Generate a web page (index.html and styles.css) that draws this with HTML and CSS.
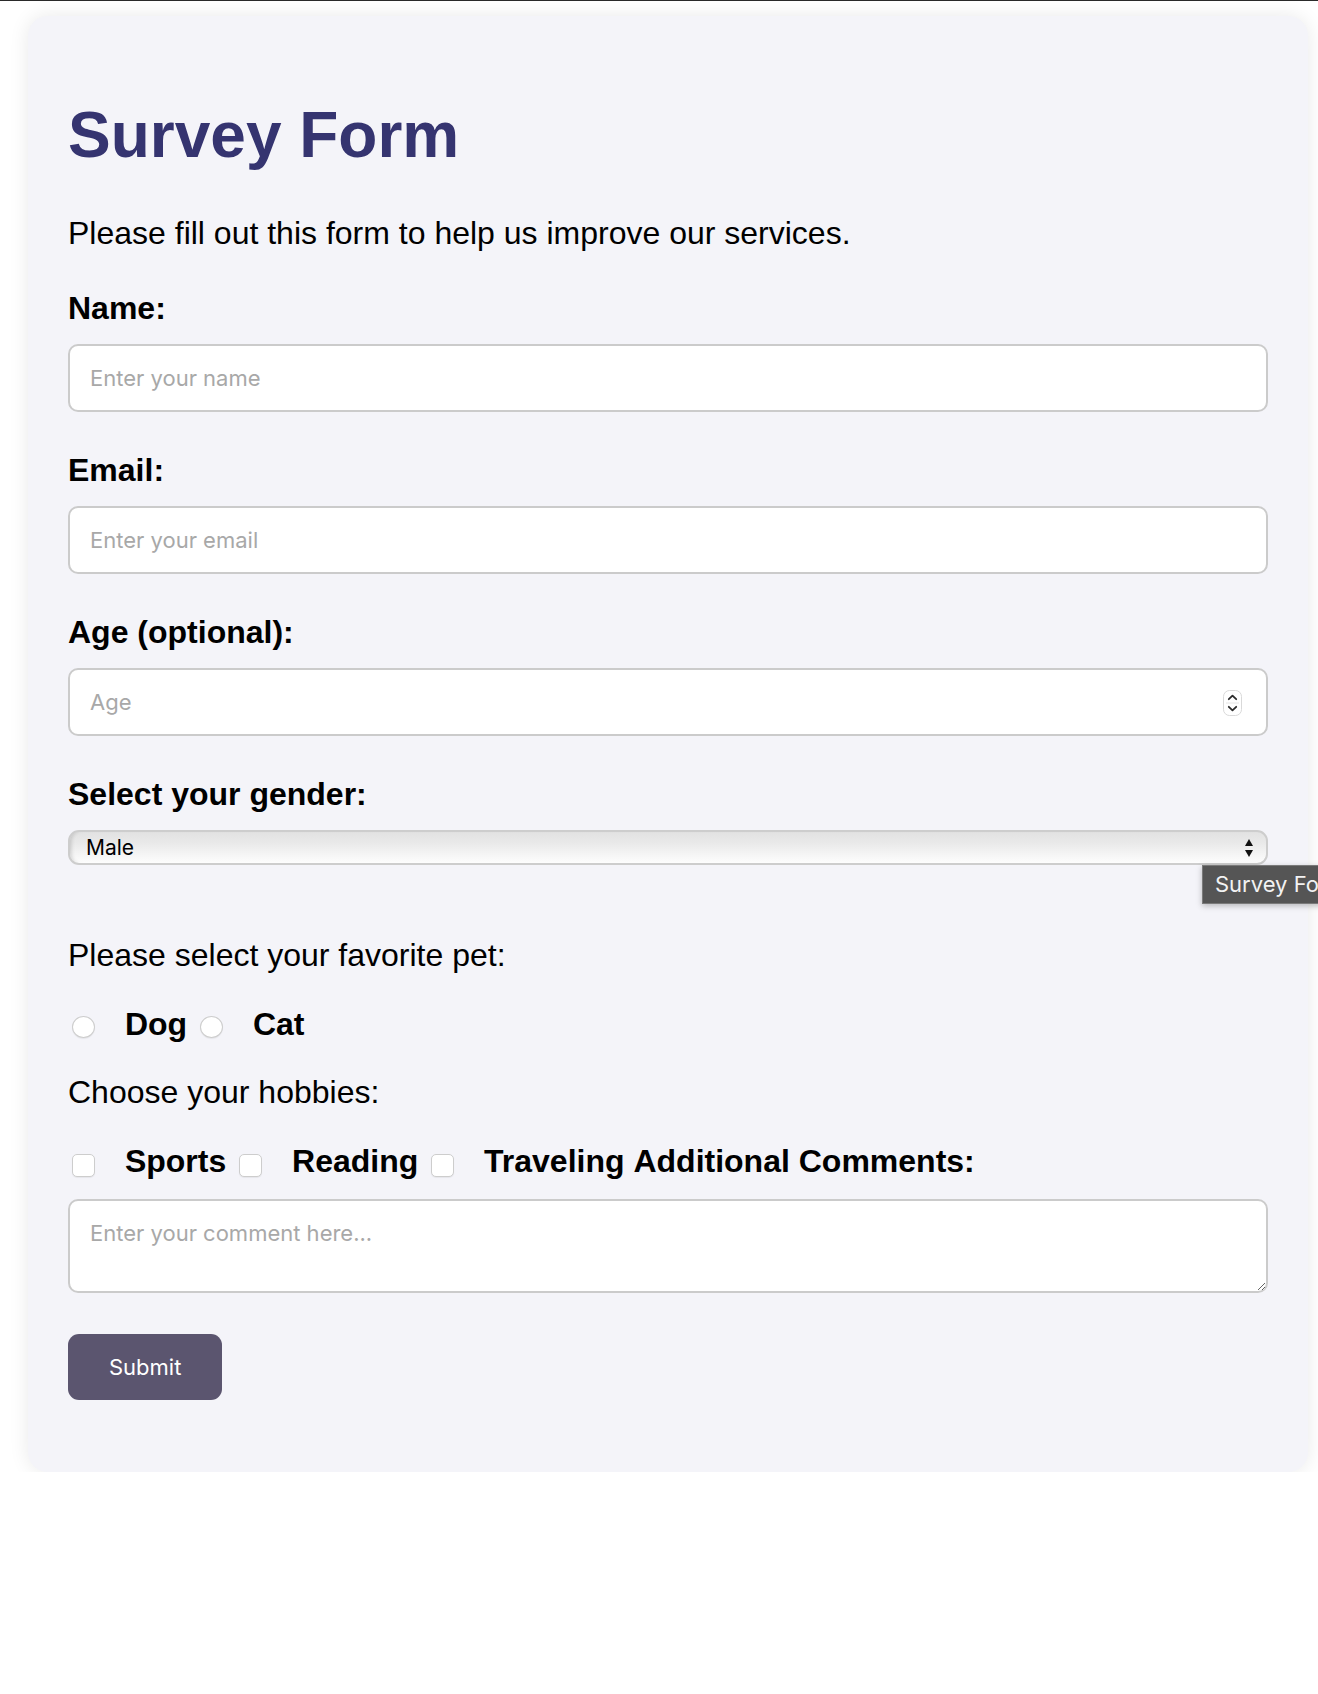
FILE: index.html
```html
<!DOCTYPE html>
<html lang="en">
<head>
<meta charset="utf-8">
<title>Survey Form</title>
<link rel="stylesheet" href="styles.css">
</head>
<body>
<div class="topline"></div>
<main class="card">
  <h1 class="title">Survey Form</h1>
  <p class="intro">Please fill out this form to help us improve our services.</p>
  <form class="form">
    <label class="field-label" for="name">Name:</label>
    <input class="text-input" id="name" type="text" placeholder="Enter your name">

    <label class="field-label" for="email">Email:</label>
    <input class="text-input" id="email" type="email" placeholder="Enter your email">

    <label class="field-label" for="age">Age (optional):</label>
    <div class="number-wrap">
      <input class="text-input" id="age" type="number" placeholder="Age">
      <span class="spinner">
        <svg width="19" height="26" viewBox="0 0 19 26">
          <rect x="0.5" y="0.5" width="18" height="25" rx="6" fill="#fff" stroke="#d9d9d9"/>
          <line x1="3" y1="13" x2="16" y2="13" stroke="#e6e6e6" stroke-width="1"/>
          <path d="M5.8 9.2 L9.5 5.6 L13.2 9.2" fill="none" stroke="#2b2b2b" stroke-width="1.8" stroke-linecap="round" stroke-linejoin="round"/>
          <path d="M5.8 16.8 L9.5 20.4 L13.2 16.8" fill="none" stroke="#2b2b2b" stroke-width="1.8" stroke-linecap="round" stroke-linejoin="round"/>
        </svg>
      </span>
    </div>

    <label class="field-label" for="gender">Select your gender:</label>
    <div class="select-wrap">
      <select class="select" id="gender">
        <option>Male</option>
        <option>Female</option>
        <option>Other</option>
      </select>
      <svg class="select-arrows" width="10" height="20" viewBox="0 0 10 20">
        <path d="M1 8 L5 1 L9 8 Z" fill="#111"/>
        <path d="M1 12 L5 19 L9 12 Z" fill="#111"/>
      </svg>
    </div>

    <p class="question question-first">Please select your favorite pet:</p>
    <div class="choice-row"><input class="radio" type="radio" id="dog" name="pet"> <label class="choice-label" for="dog">Dog</label> <input class="radio" type="radio" id="cat" name="pet"> <label class="choice-label" for="cat">Cat</label></div>

    <p class="question">Choose your hobbies:</p>
    <div class="choice-row"><input class="check" type="checkbox" id="sports"> <label class="choice-label" for="sports">Sports</label> <input class="check" type="checkbox" id="reading"> <label class="choice-label" for="reading">Reading</label> <input class="check" type="checkbox" id="traveling"> <label class="choice-label" for="traveling">Traveling</label> <label class="inline-label" for="comments">Additional Comments:</label></div>

    <textarea class="comments" id="comments" placeholder="Enter your comment here..."></textarea>

    <button class="submit" type="submit">Submit</button>
  </form>
</main>
<div class="tooltip">Survey Form</div>
</body>
</html>
```

FILE: styles.css
```css
html {
  overflow: hidden;
}

body {
  margin: 0;
  background: #ffffff;
  font-family: "Liberation Sans", Arial, sans-serif;
  color: #000;
  position: relative;
}

.topline {
  height: 1px;
  background: #2a2a2a;
}

.card {
  box-sizing: border-box;
  width: 1280px;
  margin: 15px 0 0 28px;
  padding: 40px;
  background: #f4f4f9;
  border-radius: 20px;
  box-shadow: 0 0 20px rgba(0, 0, 0, 0.09);
}

.title {
  margin: 42px 0 43px;
  font-size: 64px;
  line-height: 74px;
  font-weight: 700;
  color: #353470;
}

.intro {
  margin: 0 0 38px;
  font-size: 32px;
  line-height: 37px;
}

.form {
  margin: 0 0 32px;
}

.field-label {
  display: block;
  margin: 0 0 17px;
  font-size: 32px;
  line-height: 37px;
  font-weight: 700;
}

.text-input {
  display: block;
  box-sizing: border-box;
  width: 100%;
  height: 68px;
  margin: 0 0 40px;
  padding: 20px;
  border: 2px solid #cbcbcb;
  border-radius: 10px;
  background: #fff;
  font-family: Inter, "Liberation Sans", sans-serif;
  font-size: 22px;
  line-height: 24px;
  color: #000;
  outline: none;
  -moz-appearance: textfield;
}

.text-input::placeholder,
.comments::placeholder {
  color: #a8a8a8;
}

.text-input::-webkit-inner-spin-button,
.text-input::-webkit-outer-spin-button {
  -webkit-appearance: none;
  margin: 0;
}

.number-wrap {
  position: relative;
}

.spinner {
  position: absolute;
  right: 26px;
  top: 22px;
  width: 19px;
  height: 26px;
  display: block;
}

.spinner svg {
  display: block;
}

.select-wrap {
  position: relative;
  margin: 0 0 72px;
}

.select {
  display: block;
  box-sizing: border-box;
  width: 100%;
  height: 35px;
  margin: 0;
  padding: 0 40px 0 16px;
  border: 2px solid #cdcdcd;
  border-radius: 11px;
  background: linear-gradient(to bottom, #e2e2e2 0%, #e9e9e9 35%, #f4f4f4 70%, #fdfdfd 100%);
  box-shadow: inset 4px 0 4px -3px rgba(0, 0, 0, 0.18), inset 0 -1px 0 rgba(255, 255, 255, 0.8);
  -webkit-appearance: none;
  appearance: none;
  font-family: Inter, "Liberation Sans", sans-serif;
  font-size: 21px;
  line-height: 31px;
  color: #000;
  outline: none;
}

.select-arrows {
  position: absolute;
  right: 14px;
  top: 8px;
}

.question {
  margin: 0 0 32px;
  font-size: 32px;
  line-height: 37px;
}

.choice-row + .question {
  margin-top: 31px;
}

.choice-row {
  font-size: 32px;
  line-height: 37px;
}

.radio,
.check {
  -webkit-appearance: none;
  appearance: none;
  display: inline-block;
  box-sizing: border-box;
  width: 23px;
  height: 22px;
  margin: 0 6px 0 4px;
  border: 1px solid #cdcdcd;
  background: #fff;
  box-shadow: 0 1px 1px rgba(0, 0, 0, 0.06);
}

.radio {
  border-radius: 50%;
  vertical-align: -3px;
}

.check {
  height: 23px;
  border-radius: 5px;
  vertical-align: -5px;
}

.choice-label {
  margin-left: 15px;
  font-weight: 700;
}

.inline-label {
  font-weight: 700;
}

.comments {
  display: block;
  box-sizing: border-box;
  width: 100%;
  height: 94px;
  margin: 19px 0 41px;
  padding: 20px;
  border: 2px solid #cbcbcb;
  border-radius: 10px;
  background: #fff;
  font-family: Inter, "Liberation Sans", sans-serif;
  font-size: 22px;
  line-height: 24px;
  outline: none;
}

.submit {
  display: block;
  height: 66px;
  padding: 0 41px;
  border: none;
  border-radius: 11px;
  background: #5b556f;
  color: #fff;
  font-family: Inter, "Liberation Sans", sans-serif;
  font-size: 22px;
  line-height: 26px;
  cursor: pointer;
}

.tooltip {
  position: absolute;
  left: 1202px;
  top: 865px;
  box-sizing: border-box;
  height: 39px;
  padding: 0 12px;
  background: #555555;
  border: 1px solid #7a7a7a;
  box-shadow: 0 2px 6px rgba(0, 0, 0, 0.25);
  color: #f2f2f2;
  font-family: Inter, "Liberation Sans", sans-serif;
  font-size: 22px;
  line-height: 37px;
  white-space: nowrap;
}
```
